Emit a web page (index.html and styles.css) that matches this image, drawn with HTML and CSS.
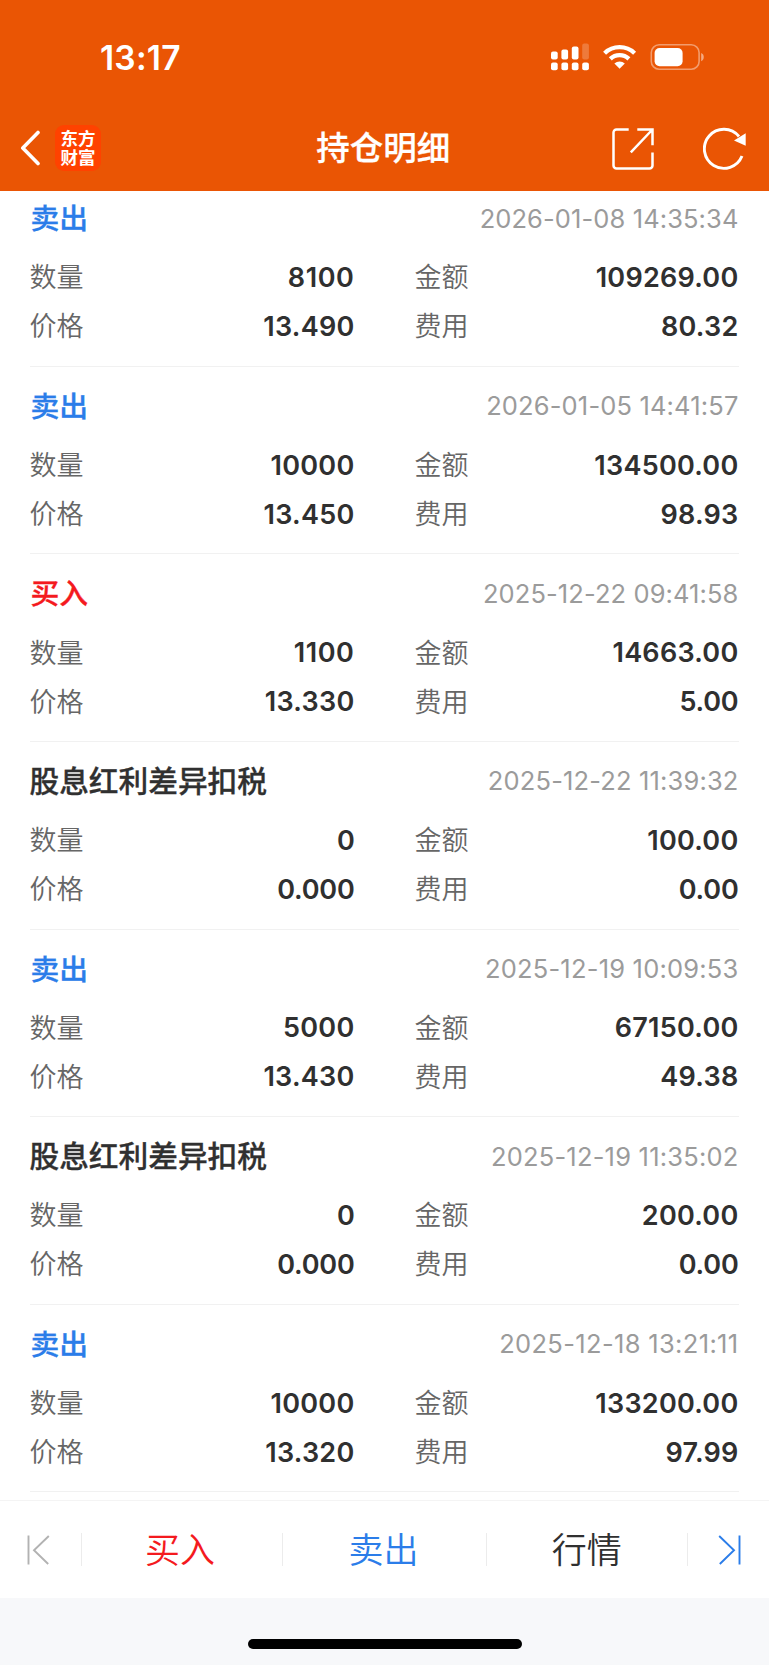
FILE: index.html
```html
<!DOCTYPE html>
<html lang="zh-CN">
<head>
<meta charset="utf-8">
<title>持仓明细</title>
<link rel="stylesheet" href="styles.css">
</head>
<body>
<div class="screen">
  <header class="header">
    <div class="status">
      <span class="clock">13:17</span>
      <svg class="status-icons" width="154" height="30" viewBox="0 0 154 30" fill="#fff">
        <rect x="0" y="9.500" width="6.7" height="8" rx="2"/><rect x="10.4" y="7.500" width="6.7" height="10" rx="2"/><rect x="20.8" y="4.500" width="6.7" height="13" rx="2"/><rect x="31.2" y="1.500" width="6.7" height="16" rx="2" opacity=".22"/>
        <rect x="0" y="20.500" width="6.7" height="7.7" rx="2"/><rect x="10.4" y="20.500" width="6.7" height="7.7" rx="2"/><rect x="20.8" y="20.500" width="6.7" height="7.7" rx="2"/><rect x="31.2" y="20.500" width="6.7" height="7.7" rx="2"/>
        <g fill="none" stroke="#fff" stroke-width="4.3"><path d="M53.6 11.200a21.8 21.8 0 0 1 30 0"/><path d="M59.3 16.900a13.4 13.4 0 0 1 18.6 0"/></g>
        <path d="M63.4 21.500a7.5 7.5 0 0 1 10.4 0l-5.2 5.3z"/>
        <rect x="100.3" y="2.800" width="47.800" height="24.400" rx="7.800" fill="none" stroke="#fff" stroke-width="1.600" opacity=".42"/>
        <rect x="103.6" y="6" width="28" height="18.2" rx="5"/>
        <path d="M150.2 11c3.4 1.2 3.4 7 0 8.200z" opacity=".5"/>
      </svg>
    </div>
    <div class="navbar">
      <div class="nav-left">
        <svg width="22" height="36" viewBox="0 0 22 36"><path d="M18 2.500 2.800 18 18 33.500" fill="none" stroke="#fff" stroke-width="3.600" stroke-linecap="round" stroke-linejoin="round"/></svg>
        <div class="logo">东方<br>财富</div>
      </div>
      <h1 class="nav-title">持仓明细</h1>
      <div class="nav-right">
        <svg width="42" height="42" viewBox="0 0 42 42" fill="none" stroke="#fff" stroke-width="2.500"><path d="M16.700 1.500H4.500a3 3 0 0 0-3 3V37.500a3 3 0 0 0 3 3H37.500a3 3 0 0 0 3-3V24.500M25.300 1.500H40.500V17.200M40 2 18.800 24.400"/></svg>
        <svg width="44" height="44" viewBox="0 0 44 44"><path d="M39 29A19.500 19.500 0 1 1 36 9.500" fill="none" stroke="#fff" stroke-width="2.900"/><path d="M42.700 6.200V18.800L31 13.600z" fill="#fff"/></svg>
      </div>
    </div>
  </header>

  <main class="list">
    <section class="record">
      <div class="record-head"><span class="kind sell">卖出</span><time class="fit-1">2026-01-08 14:35:34</time></div>
      <dl class="fields"><dt>数量</dt><dd class="wide">8100</dd><dt>金额</dt><dd>109269.00</dd><dt>价格</dt><dd>13.490</dd><dt>费用</dt><dd>80.32</dd></dl>
    </section>
    <section class="record">
      <div class="record-head"><span class="kind sell">卖出</span><time class="fit-2">2026-01-05 14:41:57</time></div>
      <dl class="fields"><dt>数量</dt><dd>10000</dd><dt>金额</dt><dd>134500.00</dd><dt>价格</dt><dd>13.450</dd><dt>费用</dt><dd>98.93</dd></dl>
    </section>
    <section class="record">
      <div class="record-head"><span class="kind buy">买入</span><time class="fit-1">2025-12-22 09:41:58</time></div>
      <dl class="fields"><dt>数量</dt><dd class="wide">1100</dd><dt>金额</dt><dd>14663.00</dd><dt>价格</dt><dd>13.330</dd><dt>费用</dt><dd class="tight">5.00</dd></dl>
    </section>
    <section class="record">
      <div class="record-head"><span class="kind">股息红利差异扣税</span><time class="fit-2">2025-12-22 11:39:32</time></div>
      <dl class="fields"><dt>数量</dt><dd class="tight">0</dd><dt>金额</dt><dd>100.00</dd><dt>价格</dt><dd class="tight">0.000</dd><dt>费用</dt><dd class="tight">0.00</dd></dl>
    </section>
    <section class="record">
      <div class="record-head"><span class="kind sell">卖出</span><time class="fit-3">2025-12-19 10:09:53</time></div>
      <dl class="fields"><dt>数量</dt><dd>5000</dd><dt>金额</dt><dd>67150.00</dd><dt>价格</dt><dd>13.430</dd><dt>费用</dt><dd>49.38</dd></dl>
    </section>
    <section class="record">
      <div class="record-head"><span class="kind">股息红利差异扣税</span><time class="fit-3">2025-12-19 11:35:02</time></div>
      <dl class="fields"><dt>数量</dt><dd class="tight">0</dd><dt>金额</dt><dd>200.00</dd><dt>价格</dt><dd class="tight">0.000</dd><dt>费用</dt><dd class="tight">0.00</dd></dl>
    </section>
    <section class="record">
      <div class="record-head"><span class="kind sell">卖出</span><time class="fit-4">2025-12-18 13:21:11</time></div>
      <dl class="fields"><dt>数量</dt><dd>10000</dd><dt>金额</dt><dd>133200.00</dd><dt>价格</dt><dd>13.320</dd><dt>费用</dt><dd>97.99</dd></dl>
    </section>
  </main>

  <nav class="toolbar">
    <span class="tool edge-first"><svg width="24" height="32" viewBox="0 0 24 32" fill="none" stroke="#b2b2b2" stroke-width="1.900"><path d="M1.500 1.500V30.500M21.800 2 7 16.200 21.200 30"/></svg></span>
    <span class="tool t-buy">买入</span>
    <span class="tool t-sell">卖出</span>
    <span class="tool t-quote">行情</span>
    <span class="tool edge-last"><svg width="24" height="32" viewBox="0 0 24 32" fill="none" stroke="#2b7de9" stroke-width="1.900"><path d="M22.500 1.500V30.500M2.200 2 17 16.200 2.800 30"/></svg></span>
  </nav>
  <div class="home-area"><div class="home-indicator"></div></div>
</div>
</body>
</html>
```
FILE: styles.css
```css
* { box-sizing: border-box; margin: 0; padding: 0; }
body { font-family: Inter, "Noto Sans CJK SC", sans-serif; background: #fff; }
.screen { width: 769px; height: 1665px; display: flex; flex-direction: column; overflow: hidden; }

.header { height: 191px; flex: none; background: #ea5504; color: #fff; display: flex; flex-direction: column; }
.status { height: 106px; padding: 42px 65px 0 100px; display: flex; justify-content: space-between; align-items: flex-start; }
.clock { font-size: 33.500px; font-weight: 600; line-height: 32px; letter-spacing: .2px; }
.status-icons { margin-right: -1px; }
.navbar { height: 84px; display: grid; grid-template-columns: 1fr auto 1fr; align-items: center; padding: 0 22px 0 19.500px; }
.nav-left { display: flex; align-items: center; gap: 13.500px; }
.logo { width: 46px; height: 46px; border-radius: 9px; background: #ff4200; padding-top: 3px; text-align: center; font-family: "Noto Sans CJK SC", sans-serif; font-size: 17.500px; line-height: 19px; font-weight: 700; }
.nav-title { padding-bottom: 4px; font-size: 33.500px; font-weight: 500; line-height: 40px; font-family: "Noto Sans CJK SC", sans-serif; -webkit-text-stroke: .3px; }
.nav-right { display: flex; justify-content: flex-end; align-items: center; gap: 49px; padding-top: 1.500px; }

.list { height: 1309px; flex: none; overflow: hidden; padding: 0 30.500px 0 29.500px; }
.record { height: 187.600px; border-bottom: 1.500px solid #f1f1f1; padding-top: 19px; }
.record:first-child { height: 175.800px; padding-top: 7px; }
.record-head { height: 40px; display: flex; justify-content: space-between; align-items: center; }
.kind { font-family: "Noto Sans CJK SC", sans-serif; font-size: 29.700px; line-height: 40px; font-weight: 500; color: #303030; -webkit-text-stroke: .3px; padding-bottom: 2px; }
.sell, .buy { font-size: 28.800px; padding-left: 1px; }
.sell { color: #2b7de9; }
.buy { color: #f41a1e; }
time { font-size: 25.500px; line-height: 40px; color: #9b9b9b; padding-top: 1px; }
.fit-1 { letter-spacing: .1px; }
.fit-2 { letter-spacing: .15px; }
.fit-3 { letter-spacing: .2px; }
.fit-4 { letter-spacing: .34px; }
.fields { margin-top: 14px; display: grid; grid-template-columns: 80px 245px 141px 1fr; grid-auto-rows: 49px; align-items: center; }
.fields dt { font-family: "Noto Sans CJK SC", sans-serif; font-size: 27px; font-weight: 350; line-height: 49px; color: #666; padding-bottom: 1.500px; }
.fields dt:nth-of-type(even) { padding-left: 60px; }
.fields dd { font-size: 27px; font-weight: 600; line-height: 49px; color: #303030; text-align: right; letter-spacing: .25px; padding-top: 1.500px; }
.fields .wide { letter-spacing: .6px; }
.fields .tight { letter-spacing: -.2px; }

.toolbar { height: 98px; flex: none; border-top: 1.500px solid #f4f4f4; display: grid; grid-template-columns: 82px 201px 204px 200.500px 1fr; align-items: center; background: #fff; }
.tool { height: 33px; display: flex; align-items: center; justify-content: center; border-right: 1px solid #ececec; font-family: "Noto Sans CJK SC", sans-serif; font-size: 35px; font-weight: 350; line-height: 33px; padding: 0 4px 4px 0; }
.edge-first { justify-content: flex-start; padding: 0 0 0 27px; }
.edge-last { border: 0; justify-content: flex-end; padding: 0 28.500px 0 0; }
.t-buy { color: #f41a1e; }
.t-sell { color: #2b7de9; padding-right: 2px; }
.t-quote { color: #303030; padding-right: 0; }
.home-area { flex: 1; background: #f7f8fa; display: flex; justify-content: center; align-items: flex-end; padding: 0 0 16px; }
.home-indicator { width: 274px; height: 10px; border-radius: 5px; background: #000; }
```
